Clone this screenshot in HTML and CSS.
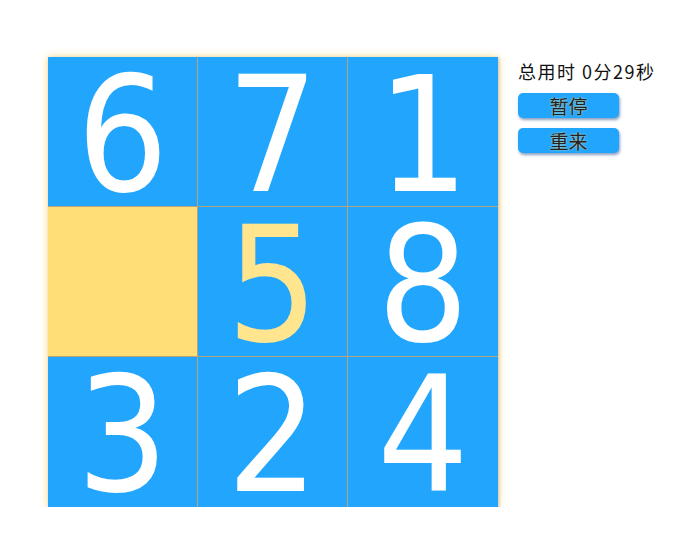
FILE: index.html
```html
<!DOCTYPE html>
<html>
<head>
<meta charset="utf-8">
<link rel="stylesheet" href="styles.css">
</head>
<body>
<div class="game">
  <div class="board">
    <div class="cell">6</div>
    <div class="cell">7</div>
    <div class="cell">1</div>
    <div class="cell empty"></div>
    <div class="cell hl">5</div>
    <div class="cell">8</div>
    <div class="cell">3</div>
    <div class="cell">2</div>
    <div class="cell">4</div>
  </div>
  <div class="panel">
    <div class="timer">总用时 0分29秒</div>
    <button class="btn">暂停</button>
    <button class="btn">重来</button>
  </div>
</div>
</body>
</html>
```

FILE: styles.css
```css
html, body {
  margin: 0;
  padding: 0;
  background: #ffffff;
}
.game {
  display: flex;
  align-items: flex-start;
  gap: 20px;
  padding: 57px 0 0 48px;
}
.board {
  display: grid;
  grid-template-columns: 150px 150px 150px;
  grid-template-rows: 150px 150px 150px;
  width: 450px;
  height: 450px;
  box-shadow: 0 0 8px rgba(255, 214, 110, 0.85), 1px 1px 3px rgba(60, 60, 60, 0.35);
}
.cell {
  box-sizing: border-box;
  background: #22a6fd;
  color: #ffffff;
  font-family: "DejaVu Sans Condensed", "DejaVu Sans", sans-serif;
  font-stretch: condensed;
  font-size: 160px;
  line-height: 150px;
  padding-top: 4px;
  text-align: center;
  overflow: hidden;
  border-right: 1px solid #b4a47e;
  border-bottom: 1px solid #b4a47e;
}
.cell:nth-child(3n) {
  border-right: none;
}
.cell:nth-child(n+7) {
  border-bottom: none;
}
.cell.empty {
  background: #ffdd77;
}
.cell.hl {
  color: #ffe58e;
}
.panel {
  display: flex;
  flex-direction: column;
  align-items: flex-start;
  padding-top: 2px;
}
.timer {
  font-family: "Noto Sans CJK SC", sans-serif;
  font-size: 18px;
  letter-spacing: 1.5px;
  line-height: 24px;
  color: #111111;
  margin-bottom: 10px;
}
.btn {
  width: 101px;
  height: 25px;
  padding: 0;
  border: none;
  border-radius: 5px;
  background: #22a6fd;
  color: #222222;
  font-family: "Noto Sans CJK SC", sans-serif;
  font-size: 19px;
  line-height: 25px;
  text-shadow: 0 0 2px rgba(255, 230, 150, 0.9);
  box-shadow: 1px 2px 3px rgba(40, 80, 140, 0.55);
  margin-bottom: 10px;
}
```
